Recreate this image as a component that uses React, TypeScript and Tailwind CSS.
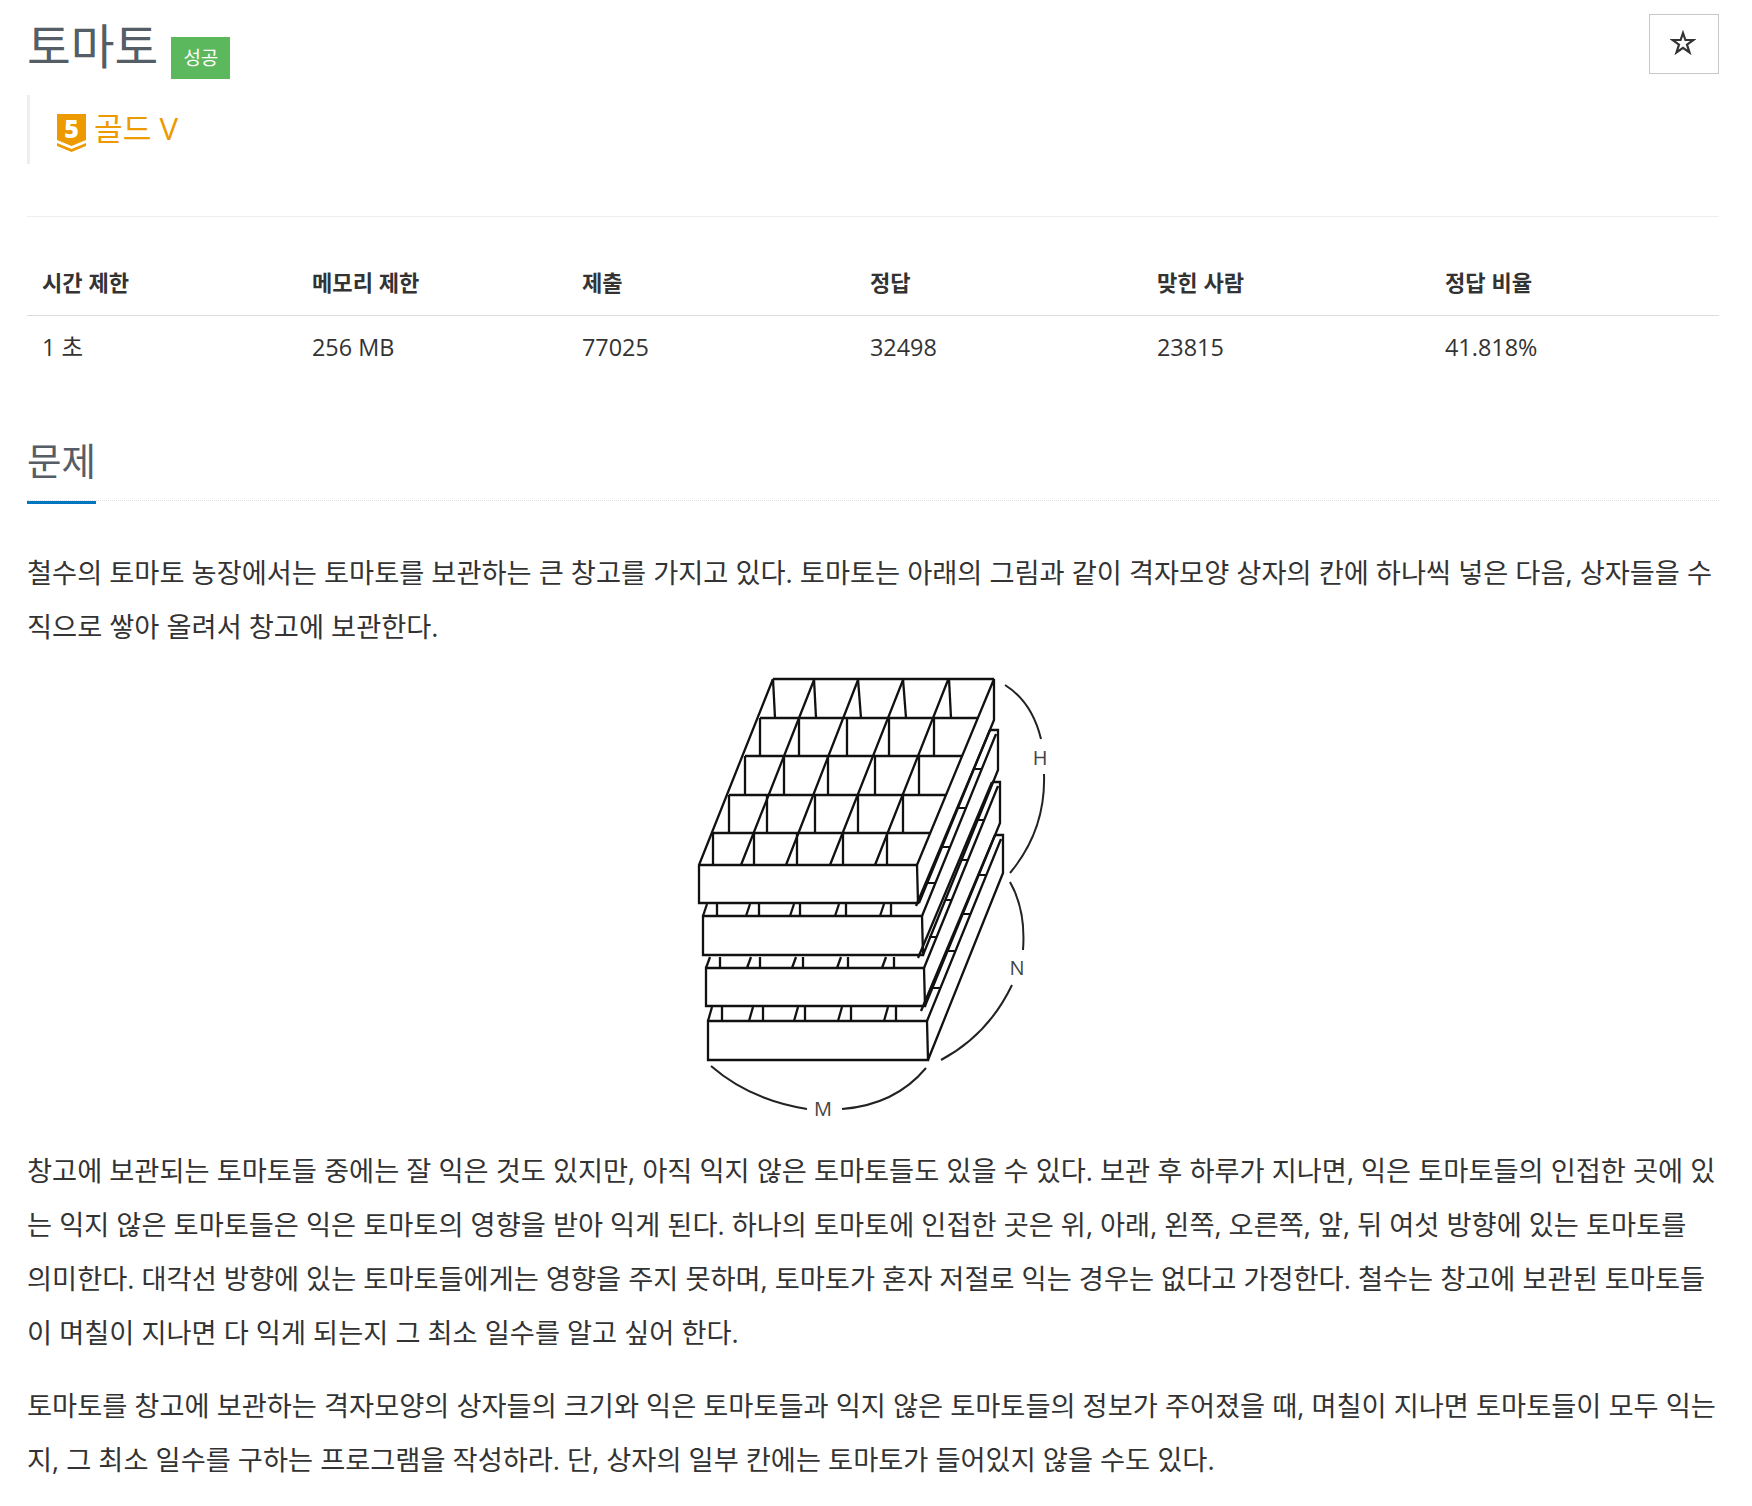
import React from "react";

const stats = [
  { label: "시간 제한", value: "1 초", width: "w-[270px]" },
  { label: "메모리 제한", value: "256 MB", width: "w-[270px]" },
  { label: "제출", value: "77025", width: "w-[288px]" },
  { label: "정답", value: "32498", width: "w-[287px]" },
  { label: "맞힌 사람", value: "23815", width: "w-[288px]" },
  { label: "정답 비율", value: "41.818%", width: "w-[289px]" },
];

// row/partition x positions for the top box, read off the picture
const rows = [
  { y: 19, l: 93, r: 314 },
  { y: 58, l: 80, r: 298 },
  { y: 96, l: 65, r: 282 },
  { y: 135, l: 49, r: 266 },
  { y: 173, l: 33, r: 250 },
  { y: 205, l: 19, r: 237 },
];
const uprights = [
  [93, 134, 178, 223, 269, 95, 136, 181, 226, 271],
  [80, 119, 167, 209, 254, 80, 119, 167, 209, 254],
  [65, 104, 148, 195, 239, 65, 104, 148, 195, 239],
  [49, 87, 135, 178, 223, 49, 87, 135, 178, 223],
  [33, 74, 117, 163, 207, 33, 74, 117, 163, 207],
];

const lowerBoxes = [
  { l: 23, r: 242, t: 256, b: 295, gap: 244, v: [37, 79, 120, 166, 211], s: [25, 66, 110, 155, 200], bx: 318, by: 70, by2: 110 },
  { l: 26, r: 244, t: 308, b: 346, gap: 297, v: [40, 80, 123, 168, 214], s: [27, 67, 112, 157, 202], bx: 320, by: 122, by2: 163 },
  { l: 28, r: 247, t: 361, b: 400, gap: 347, v: [42, 83, 125, 171, 216], s: [28, 69, 114, 158, 204], bx: 323, by: 175, by2: 213 },
];

const TomatoBoxes = () => (
  <svg width="400" height="470" viewBox="0 0 400 470" fill="none" stroke="#111" strokeWidth="2.3" className="block">
    {/* top box */}
    {rows.map((r) => (
      <line key={r.y} x1={r.l} y1={r.y} x2={r.r} y2={r.y} />
    ))}
    {uprights.map((u, i) =>
      u.slice(0, 5).map((x, j) => (
        <line key={`${i}-${j}`} x1={x} y1={rows[i].y} x2={u[j + 5]} y2={rows[i + 1].y} />
      ))
    )}
    <path d="M93 19 L19 205 V243 H238 L237 205 L314 19 V60 L239 243" />
    <path d="M134 20 L61 205 M178 20 L106 205 M223 20 L150 205 M268 20 L195 205" />
    {/* lower boxes */}
    {lowerBoxes.map((b) => (
      <g key={b.t}>
        <path d={`M${b.l} ${b.t} H${b.r} L${b.r + 1} ${b.b} H${b.l} Z`} />
        <path d={`M${b.l} ${b.t} L${b.l + 4} ${b.gap}`} />
        {b.v.map((x) => (
          <line key={x} x1={x} y1={b.gap} x2={x} y2={b.t} />
        ))}
        {b.s.slice(1).map((x) => (
          <line key={x} x1={x} y1={b.t} x2={x + 4} y2={b.gap} />
        ))}
        <path d={`M${b.r} ${b.t} L${b.bx - 2} ${b.by + 4} M${b.bx - 8} ${b.by} H${b.bx} V${b.by2} L${b.r + 1} ${b.b}`} />
        <path d={`M${b.bx - 8} ${b.by} L${b.r - 6} ${b.t - 10}`} />
      </g>
    ))}
    {/* ticks joining the double side slats */}
    <path d="M294 109 H302 M277 148 H286 M261 187 H270 M246 223 H256" strokeWidth="1.8" />
    <path d="M298 160 H304 M281 200 H288 M265 240 H272 M249 277 H256" strokeWidth="1.8" />
    <path d="M299 215 H306 M283 254 H290 M268 291 H275 M253 328 H260" strokeWidth="1.8" />
    {/* dimension arcs */}
    <g strokeWidth="2" stroke="#222">
      <path d="M325 25 Q352 42 361 79" />
      <path d="M364 114 Q366 170 330 213" />
      <path d="M330 222 Q346 250 343 290" />
      <path d="M332 325 Q308 375 261 400" />
      <path d="M31 406 Q70 440 127 449" />
      <path d="M162 449 Q215 445 246 408" />
    </g>
    <g fill="#444" stroke="none" fontSize="20" textAnchor="middle" fontFamily="'Open Sans', sans-serif">
      <text x="360" y="105">H</text>
      <text x="337" y="315">N</text>
      <text x="143" y="456">M</text>
    </g>
  </svg>
);

const GoldBadge = () => (
  <div className="relative h-[38px] w-[30px] shrink-0">
    <svg width="30" height="38" viewBox="0 0 30 38" className="block">
      <path d="M0 0 H29 V26 L14.5 32 L0 26 Z" fill="#ec9a00" />
      <path d="M0 29 L14.5 35 L29 29 V32 L14.5 38 L0 32 Z" fill="#ec9a00" />
    </svg>
    <span className="absolute left-0 top-[2px] w-[29px] text-center text-[25px] leading-[25px] font-extrabold text-white">5</span>
  </div>
);

export default function App() {
  return (
    <div className="min-h-[1506px] bg-white pl-[27px] pr-[33px] pt-[14px] font-['Open_Sans','Noto_Sans_CJK_KR',sans-serif] text-[#333]">
      {/* title */}
      <div className="flex items-start justify-between">
        <div className="flex items-start">
          <h1 className="mt-[2px] text-[47.6px] leading-[60px] font-normal text-[#555d66]">토마토</h1>
          <span className="ml-[13px] mt-[23px] flex h-[42px] w-[59px] items-center justify-center bg-[#5cb85c] text-[19px] text-white">성공</span>
        </div>
        <button className="flex h-[60px] w-[70px] items-center justify-center border border-[#c8c8c8]">
          <svg width="26" height="26" viewBox="0 0 26 26" className="-translate-x-px -translate-y-px">
            <path d="M13 3 L15.4 10 H23.5 L17 14.6 L19.5 22.5 L13 17.8 L6.5 22.5 L9 14.6 L2.5 10 H10.6 Z" fill="none" stroke="#333" strokeWidth="2.2" />
          </svg>
        </button>
      </div>

      {/* tier */}
      <div className="mt-[16px] flex h-[69px] items-start border-l-[3px] border-[#eee] pl-[27px] pt-[19px]">
        <GoldBadge />
        <span className="ml-[7px] -mt-[6px] text-[31.2px] leading-[40px] text-[#ec9a00]">골드 V</span>
      </div>

      <hr className="mt-[52px] border-t border-[#eee]" />

      {/* stats table */}
      <table className="mt-[49px] w-full table-fixed border-collapse text-[23.4px]">
        <thead>
          <tr className="border-b border-[#ddd]">
            {stats.map((s) => (
              <th key={s.label} className={`${s.width} px-[15px] pb-[17px] text-left text-[22.1px] leading-[32px] font-bold text-[#333]`}>
                {s.label}
              </th>
            ))}
          </tr>
        </thead>
        <tbody>
          <tr>
            {stats.map((s) => (
              <td key={s.label} className="px-[15px] pt-[15px] leading-[32px] text-[#333]">
                {s.value}
              </td>
            ))}
          </tr>
        </tbody>
      </table>

      {/* problem section */}
      <section className="mt-[72px]">
        <div className="border-b border-dotted border-[#ddd]">
          <h2 className="-mb-[4px] inline-block border-b-[3px] border-[#0076c0] pb-[14px] text-[37.5px] leading-[52px] font-normal text-[#555d66]">문제</h2>
        </div>
        <div className="mt-[45px] text-[27.25px] leading-[54px] text-[#333]">
          <p>철수의 토마토 농장에서는 토마토를 보관하는 큰 창고를 가지고 있다. 토마토는 아래의 그림과 같이 격자모양 상자의 칸에 하나씩 넣은 다음, 상자들을 수직으로 쌓아 올려서 창고에 보관한다.</p>
          <div className="mt-[6px] flex justify-center pl-[13.5px]">
            <TomatoBoxes />
          </div>
          <p className="mt-[14px]">창고에 보관되는 토마토들 중에는 잘 익은 것도 있지만, 아직 익지 않은 토마토들도 있을 수 있다. 보관 후 하루가 지나면, 익은 토마토들의 인접한 곳에 있는 익지 않은 토마토들은 익은 토마토의 영향을 받아 익게 된다. 하나의 토마토에 인접한 곳은 위, 아래, 왼쪽, 오른쪽, 앞, 뒤 여섯 방향에 있는 토마토를<br />의미한다. 대각선 방향에 있는 토마토들에게는 영향을 주지 못하며, 토마토가 혼자 저절로 익는 경우는 없다고 가정한다. 철수는 창고에 보관된 토마토들이 며칠이 지나면 다 익게 되는지 그 최소 일수를 알고 싶어 한다.</p>
          <p className="mt-[19px]">토마토를 창고에 보관하는 격자모양의 상자들의 크기와 익은 토마토들과 익지 않은 토마토들의 정보가 주어졌을 때, 며칠이 지나면 토마토들이 모두 익는지, 그 최소 일수를 구하는 프로그램을 작성하라. 단, 상자의 일부 칸에는 토마토가 들어있지 않을 수도 있다.</p>
        </div>
      </section>
    </div>
  );
}
